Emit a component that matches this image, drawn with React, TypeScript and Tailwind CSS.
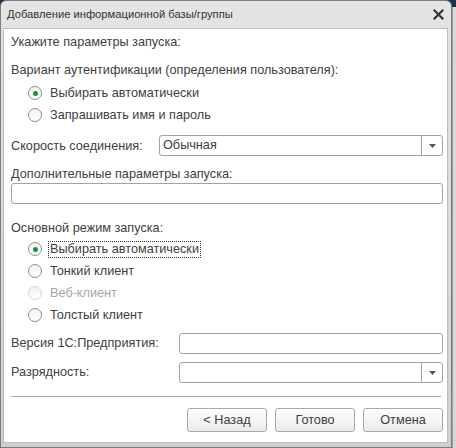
import React from 'react';

const font = { fontFamily: '"Liberation Sans", Arial, sans-serif' };

const Radio: React.FC<{ label: string; checked?: boolean; disabled?: boolean; focused?: boolean }> = ({ label, checked, disabled, focused }) => (
  <div className="flex h-[22px] items-center pl-[17px]">
    <span
      className={`flex h-[14px] w-[14px] items-center justify-center rounded-full border bg-gradient-to-b from-[#f2f2f2] to-white ${
        disabled ? 'border-[#d4d4d4]' : 'border-[#8e8e8e]'
      }`}
    >
      {checked && <span className="h-[5px] w-[5px] rounded-full bg-[#149046]" />}
    </span>
    <span
      className={`ml-[6px] px-[1px] leading-[15px] ${disabled ? 'text-[#a6a6a6]' : 'text-[#404040]'} ${
        focused ? 'border border-dotted border-[#333]' : 'border border-transparent'
      }`}
    >
      {label}
    </span>
  </div>
);

const Combo: React.FC<{ value?: string; className?: string }> = ({ value, className }) => (
  <div className={`flex h-[21px] items-stretch rounded-[3px] border border-[#a3a3a3] bg-white ${className ?? ''}`}>
    <div className="flex flex-1 items-center pl-[3px] text-[#404040]">{value}</div>
    <div className="flex w-[21px] items-center justify-center border-l border-[#a3a3a3]">
      <svg width="7" height="4" viewBox="0 0 7 4">
        <path d="M0 0h7L3.5 4z" fill="#555" />
      </svg>
    </div>
  </div>
);

const Button: React.FC<{ label: string }> = ({ label }) => (
  <button className="flex h-[24px] w-[80px] items-center justify-center rounded-[3px] border border-[#a8a8a8] bg-gradient-to-b from-white to-[#ebebeb] text-[12.7px] text-[#404040]">
    {label}
  </button>
);

export default function App() {
  return (
    <div className="flex h-[448px] w-[456px] bg-[#1e2f4d] text-[12.7px]" style={font}>
      {/* window */}
      <div className="flex w-[452px] flex-col rounded-t-[6px] border border-[#7d7d7d] bg-gradient-to-b from-[#e4e4e4] to-[#cfcfcf]">
        {/* title bar */}
        <div className="flex h-[27px] items-center justify-between pl-[6px] pr-[7px]">
          <span className="text-[11.2px] text-[#333]">Добавление информационной базы/группы</span>
          <svg width="11" height="11" viewBox="0 0 11 11">
            <path d="M1.5 1.5l8 8M9.5 1.5l-8 8" stroke="#333" strokeWidth="2.2" strokeLinecap="square" />
          </svg>
        </div>
        {/* client area */}
        <div className="mb-[4px] ml-[2px] mr-[3px] flex flex-1 flex-col border border-[#bcbcbc] bg-white pl-[7px] pr-[4px] pt-[5px]">
          <div className="flex h-[18px] items-center text-[#404040]">Укажите параметры запуска:</div>
          <div className="mt-[10px] flex h-[18px] items-center text-[#404040]">Вариант аутентификации (определения пользователя):</div>
          <div className="mt-[2px]">
            <Radio label="Выбирать автоматически" checked />
            <Radio label="Запрашивать имя и пароль" />
          </div>
          <div className="mt-[9px] flex items-center">
            <span className="w-[148px] pt-[2px] text-[#404040]">Скорость соединения:</span>
            <Combo value="Обычная" className="flex-1" />
          </div>
          <div className="mt-[9px] flex h-[18px] items-center text-[#404040]">Дополнительные параметры запуска:</div>
          <div className="h-[21px] rounded-[3px] border border-[#a3a3a3] bg-white" />
          <div className="mt-[15px] flex h-[18px] items-center text-[#404040]">Основной режим запуска:</div>
          <div className="mt-[1px]">
            <Radio label="Выбирать автоматически" checked focused />
            <Radio label="Тонкий клиент" />
            <Radio label="Веб-клиент" disabled />
            <Radio label="Толстый клиент" />
          </div>
          <div className="mt-[7px] flex items-center">
            <span className="w-[168px] text-[#404040]">Версия 1С:Предприятия:</span>
            <div className="h-[21px] flex-1 rounded-[3px] border border-[#a3a3a3] bg-white" />
          </div>
          <div className="mt-[8px] flex items-center">
            <span className="w-[168px] text-[#404040]">Разрядность:</span>
            <Combo className="flex-1" />
          </div>
          <div className="mr-[2px] mt-[13px] h-px bg-[#a8a8a8]" />
          <div className="mt-[11px] flex justify-end gap-[8px]">
            <Button label="< Назад" />
            <Button label="Готово" />
            <Button label="Отмена" />
          </div>
        </div>
      </div>
      {/* neighbouring window edge */}
      <div className="flex w-[4px] flex-col">
        <div className="h-[7px] bg-[#1e2f4d]" />
        <div className="flex-1 border-l border-[#9a9a9a] bg-[#d9d9d9]" />
      </div>
    </div>
  );
}
